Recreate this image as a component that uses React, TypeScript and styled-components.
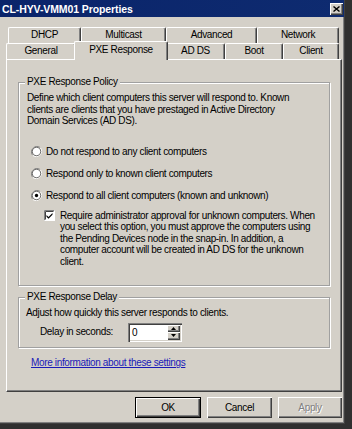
import React from 'react';
import styled, { createGlobalStyle } from 'styled-components';

const face = '#d4d0c8';

const GlobalStyle = createGlobalStyle`
  html, body {
    margin: 0;
    padding: 0;
    background: #303030;
  }
  body {
    font-family: 'Liberation Sans', Arial, sans-serif;
    font-size: 10px;
    letter-spacing: -0.35px;
    color: #000;
  }
`;

const Window = styled.div`
  width: 345px;
  height: 424px;
  box-sizing: border-box;
  background: ${face};
  border-right: 1px solid #404040;
  border-bottom: 1px solid #404040;
  box-shadow: inset -1px -1px #808080;
  display: flex;
  flex-direction: column;
`;

const TitleBar = styled.div`
  height: 17px;
  background: linear-gradient(90deg, #0a246a, #0e2b70);
  display: flex;
  align-items: center;
  justify-content: space-between;
  padding: 0 1px 0 2px;
`;

const TitleText = styled.span`
  color: #fff;
  font-weight: bold;
  font-size: 10.5px;
  letter-spacing: -0.1px;
`;

const CloseButton = styled.div`
  width: 13px;
  height: 12px;
  box-sizing: border-box;
  background: ${face};
  box-shadow: inset 1px 1px #fff, inset -1px -1px #404040, inset -2px -2px #808080;
  display: flex;
  align-items: center;
  justify-content: center;
`;

const Content = styled.div`
  flex: 1;
  padding: 10px 2px 0 6px;
  display: flex;
  flex-direction: column;
`;

const TabStrip = styled.div`
  display: flex;
  flex-direction: column;
`;

const TabRow = styled.div<{ $indent: number }>`
  display: flex;
  height: 16px;
  padding-left: ${(p) => p.$indent}px;
  align-items: flex-end;
`;

const Tab = styled.div<{ $width: number; $active?: boolean }>`
  width: ${(p) => p.$width}px;
  height: ${(p) => (p.$active ? 19 : 16)}px;
  box-sizing: border-box;
  border-top: 1px solid #fff;
  border-left: 1px solid #fff;
  border-right: 1px solid #404040;
  border-radius: 2px 2px 0 0;
  box-shadow: inset -1px 0 #808080;
  background: ${face};
  text-align: center;
  line-height: ${(p) => (p.$active ? 15 : 14)}px;
  white-space: nowrap;
  position: relative;
  ${(p) =>
    p.$active &&
    `
    z-index: 2;
    margin: 0 -2px -1px -2px;
    width: ${p.$width + 4}px;
    padding-bottom: 2px;
  `}
`;

const Page = styled.div`
  height: 333px;
  box-sizing: border-box;
  border-top: 1px solid #fff;
  border-left: 1px solid #fff;
  border-right: 1px solid #404040;
  border-bottom: 1px solid #404040;
  box-shadow: inset -1px -1px #808080;
  padding: 0 11px;
  display: flex;
  flex-direction: column;
`;

const GroupBox = styled.div<{ $top: number; $height: number }>`
  position: relative;
  margin-top: ${(p) => p.$top}px;
  height: ${(p) => p.$height}px;
  box-sizing: border-box;
  border: 1px solid #a0a0a0;
  box-shadow: inset 1px 1px #fff, 1px 1px #fff;
`;

const Legend = styled.span`
  position: absolute;
  top: -7px;
  left: 6px;
  padding: 0 2px;
  background: ${face};
  line-height: 12px;
`;

const GroupBody = styled.div<{ $pad: string }>`
  padding: ${(p) => p.$pad};
  line-height: 11.5px;
  white-space: nowrap;
`;

const Paragraph = styled.div`
  line-height: 11.5px;
`;

const OptionRow = styled.div<{ $top: number; $indent: number }>`
  display: flex;
  align-items: flex-start;
  margin-top: ${(p) => p.$top}px;
  padding-left: ${(p) => p.$indent}px;
  line-height: 11.5px;
`;

const MarkWrap = styled.div<{ $gap: number }>`
  flex: none;
  display: flex;
  margin-right: ${(p) => p.$gap}px;
  margin-top: 0.5px;
`;

const DelayRow = styled.div`
  display: flex;
  align-items: center;
  margin-top: 4px;
  padding-left: 14px;
`;

const DelayLabel = styled.span`
  width: 88px;
`;

const Spinner = styled.div`
  width: 54px;
  height: 19px;
  box-sizing: border-box;
  background: #fff;
  box-shadow: inset 1px 1px #808080, inset 2px 2px #404040, inset -1px -1px #fff, inset -2px -2px ${face};
  display: flex;
  padding: 2px;
`;

const SpinValue = styled.span`
  flex: 1;
  padding-left: 2px;
  line-height: 15px;
`;

const SpinButtons = styled.div`
  width: 13px;
  display: flex;
  flex-direction: column;
`;

const SpinButton = styled.div`
  flex: 1;
  background: ${face};
  box-shadow: inset 1px 1px #fff, inset -1px -1px #404040, inset -2px -2px #808080;
  display: flex;
  align-items: center;
  justify-content: center;
`;

const Link = styled.a`
  margin-top: 9px;
  margin-left: 13px;
  color: #1a1ab8;
  text-decoration: underline;
  line-height: 12px;
  align-self: flex-start;
`;

const ButtonRow = styled.div`
  display: flex;
  justify-content: flex-end;
  gap: 6px;
  margin-top: 5px;
`;

const Button = styled.div<{ $default?: boolean; $disabled?: boolean; $width: number }>`
  width: ${(p) => p.$width}px;
  height: 21px;
  box-sizing: border-box;
  background: ${face};
  display: flex;
  align-items: center;
  justify-content: center;
  color: ${(p) => (p.$disabled ? '#808080' : '#000')};
  text-shadow: ${(p) => (p.$disabled ? '1px 1px #fff' : 'none')};
  border: ${(p) => (p.$default ? '1px solid #000' : 'none')};
  box-shadow: inset 1px 1px #fff, inset -1px -1px #404040, inset -2px -2px #808080;
`;

const Radio = ({ checked }: { checked?: boolean }) => (
  <svg width="11" height="11" viewBox="0 0 12 12">
    <path d="M10.2 1.8 A6 6 0 0 0 1.8 10.2" fill="none" stroke="#808080" strokeWidth="1" />
    <path d="M1.8 10.2 A6 6 0 0 0 10.2 1.8" fill="none" stroke="#fff" strokeWidth="1" />
    <circle cx="6" cy="6" r="4.6" fill="#fff" stroke="#404040" strokeWidth="0.8" />
    {checked && <circle cx="6" cy="6" r="1.8" fill="#000" />}
  </svg>
);

const CheckBox = () => (
  <svg width="11" height="11" viewBox="0 0 11 11">
    <rect x="0" y="0" width="11" height="11" fill="#fff" />
    <path d="M0.5 10.5 V0.5 H10.5" fill="none" stroke="#808080" />
    <path d="M1.5 9.5 V1.5 H9.5" fill="none" stroke="#404040" />
    <path d="M0.5 10.5 H10.5 V0.5" fill="none" stroke="#fff" />
    <path d="M2.5 5 L4.5 7 L8.5 3 L8.5 4.8 L4.5 8.8 L2.5 6.8 Z" fill="#000" />
  </svg>
);

const Arrow = ({ up }: { up?: boolean }) => (
  <svg width="5" height="3" viewBox="0 0 5 3">
    <path d={up ? 'M0 3 L2.5 0 L5 3 Z' : 'M0 0 L2.5 3 L5 0 Z'} fill="#000" />
  </svg>
);

const topTabs = [
  { label: 'DHCP', width: 73 },
  { label: 'Multicast', width: 85 },
  { label: 'Advanced', width: 91 },
  { label: 'Network', width: 82 },
];

const bottomTabs = [
  { label: 'General', width: 70 },
  { label: 'PXE Response', width: 90, active: true },
  { label: 'AD DS', width: 59 },
  { label: 'Boot', width: 58 },
  { label: 'Client', width: 56 },
];

const radios = [
  { label: 'Do not respond to any client computers', top: 19 },
  { label: 'Respond only to known client computers', top: 10.5 },
  { label: 'Respond to all client computers (known and unknown)', top: 10.5, checked: true },
];

export default function App() {
  return (
    <>
      <GlobalStyle />
      <Window>
        <TitleBar>
          <TitleText>CL-HYV-VMM01 Properties</TitleText>
          <CloseButton>
            <svg width="7" height="6" viewBox="0 0 7 6">
              <path d="M0.5 0.5 L6.5 5.5 M6.5 0.5 L0.5 5.5" stroke="#000" strokeWidth="1.4" />
            </svg>
          </CloseButton>
        </TitleBar>
        <Content>
          <TabStrip>
            <TabRow $indent={2}>
              {topTabs.map((t) => (
                <Tab key={t.label} $width={t.width}>
                  {t.label}
                </Tab>
              ))}
            </TabRow>
            <TabRow $indent={0}>
              {bottomTabs.map((t) => (
                <Tab key={t.label} $width={t.width} $active={t.active}>
                  {t.label}
                </Tab>
              ))}
            </TabRow>
          </TabStrip>
          <Page>
            <GroupBox $top={22} $height={204}>
              <Legend>PXE Response Policy</Legend>
              <GroupBody $pad="9px 8px 0 8px">
                <Paragraph>
                  Define which client computers this server will respond to. Known
                  <br />
                  clients are clients that you have prestaged in Active Directory
                  <br />
                  Domain Services (AD DS).
                </Paragraph>
                {radios.map((r) => (
                  <OptionRow key={r.label} $top={r.top} $indent={4}>
                    <MarkWrap $gap={4}>
                      <Radio checked={r.checked} />
                    </MarkWrap>
                    <span>{r.label}</span>
                  </OptionRow>
                ))}
                <OptionRow $top={8.5} $indent={17}>
                  <MarkWrap $gap={5}>
                    <CheckBox />
                  </MarkWrap>
                  <span>
                    Require administrator approval for unknown computers. When
                    <br />
                    you select this option, you must approve the computers using
                    <br />
                    the Pending Devices node in the snap-in. In addition, a
                    <br />
                    computer account will be created in AD DS for the unknown
                    <br />
                    client.
                  </span>
                </OptionRow>
              </GroupBody>
            </GroupBox>
            <GroupBox $top={11} $height={51}>
              <Legend>PXE Response Delay</Legend>
              <GroupBody $pad="9px 7px 0 7px">
                <Paragraph>Adjust how quickly this server responds to clients.</Paragraph>
                <DelayRow>
                  <DelayLabel>Delay in seconds:</DelayLabel>
                  <Spinner>
                    <SpinValue>0</SpinValue>
                    <SpinButtons>
                      <SpinButton>
                        <Arrow up />
                      </SpinButton>
                      <SpinButton>
                        <Arrow />
                      </SpinButton>
                    </SpinButtons>
                  </Spinner>
                </DelayRow>
              </GroupBody>
            </GroupBox>
            <Link>More information about these settings</Link>
          </Page>
          <ButtonRow>
            <Button $width={66} $default>
              OK
            </Button>
            <Button $width={65}>Cancel</Button>
            <Button $width={64} $disabled>
              Apply
            </Button>
          </ButtonRow>
        </Content>
      </Window>
    </>
  );
}
